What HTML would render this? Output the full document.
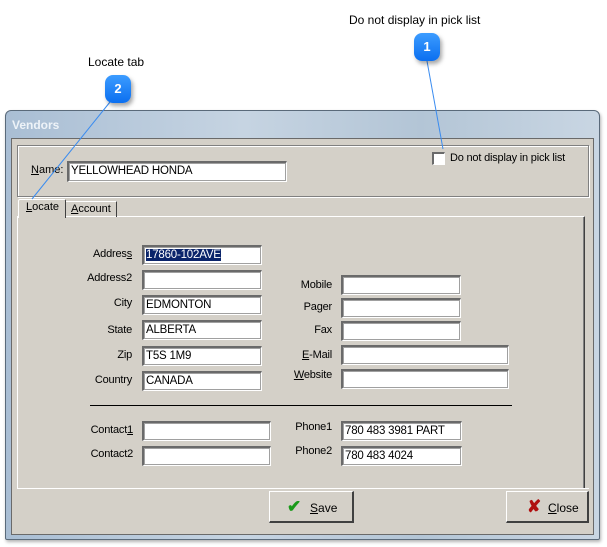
<!DOCTYPE html>
<html><head><meta charset="utf-8"><style>
body{margin:0;width:607px;height:547px;background:#fff;position:relative;overflow:hidden;font-family:"Liberation Sans",sans-serif;font-size:11px;color:#000}
div,span{position:absolute;box-sizing:border-box}
.in{background:#fff;border-top:2px solid #6a6a6a;border-left:2px solid #6a6a6a;border-bottom:1px solid #fff;border-right:1px solid #fff;box-shadow:0 0 0 1px #a0a0a0 inset;padding:2px 0 0 2px;white-space:nowrap;font-size:11.5px;letter-spacing:-0.2px}
.lb{text-align:right;width:80px;white-space:nowrap;letter-spacing:-0.2px}
.rl{text-align:right;width:60px;white-space:nowrap;letter-spacing:-0.2px}
.badge{width:26px;height:28px;border-radius:8px;background:linear-gradient(#3c9cff,#0b6ff0);color:#fff;font-weight:bold;font-size:13px;text-align:center;line-height:28px;box-shadow:2px 3px 4px rgba(0,0,0,.35)}
.btn{background:#d4d0c8;border-top:1px solid #fff;border-left:1px solid #fff;border-right:2px solid #404040;border-bottom:2px solid #404040;font-size:12px}
</style></head><body>
<span style="left:349px;top:13px;font-size:12px">Do not display in pick list</span>
<span style="left:88px;top:55px;font-size:12px">Locate tab</span>
<div style="left:5px;top:110px;width:595px;height:430px;border:1px solid #5a6a7a;border-radius:6px 6px 2px 2px;background:linear-gradient(90deg,#a9bed4,#c6d4e2 40%,#b3c5d6 70%,#c9d6e3);box-shadow:1px 2px 3px rgba(0,0,0,.3)"></div>
<span style="left:12px;top:118px;color:#eef3f8;font-size:12px;font-weight:bold">Vendors</span>
<div style="left:11px;top:138px;width:583px;height:397px;background:#d4d0c8;border:1px solid #6a6a6a"></div>
<div style="left:17px;top:145px;width:572px;height:52px;border:1px solid #808080;box-shadow:1px 1px 0 #fff inset,1px 1px 0 #fff"></div>
<span style="left:31px;top:164px"><u>N</u>ame:</span>
<div class="in" style="left:67px;top:161px;width:220px;height:21px">YELLOWHEAD HONDA</div>
<div style="left:432px;top:152px;width:13px;height:13px;background:#fff;border-top:2px solid #6a6a6a;border-left:2px solid #6a6a6a;border-right:1px solid #fff;border-bottom:1px solid #fff"></div>
<span style="left:450px;top:152px;letter-spacing:-0.2px">Do not display in pick list</span>
<div style="left:17px;top:216px;width:568px;height:273px;border-top:1px solid #fff;border-left:1px solid #fff;border-right:1px solid #404040;box-shadow:-1px 0 0 #808080 inset;border-bottom:1px solid #808080"></div>
<div style="left:18px;top:199px;width:48px;height:19px;background:#d4d0c8;border-top:1px solid #fff;border-left:1px solid #fff;border-right:1px solid #404040;border-radius:2px 2px 0 0"></div>
<span style="left:26px;top:201px"><u>L</u>ocate</span>
<div style="left:66px;top:201px;width:51px;height:16px;border-top:1px solid #fff;border-right:1px solid #404040"></div>
<span style="left:71px;top:203px"><u>A</u>ccount</span>
<span class="lb" style="left:52px;top:248px">Addres<u>s</u></span><div class="in" style="left:142px;top:245px;width:120px;height:20px"><span style="position:static;background:#0a246a;color:#fff">17860-102AVE</span></div>
<span class="lb" style="left:52px;top:272px">Address2</span><div class="in" style="left:142px;top:270px;width:120px;height:20px"></div>
<span class="lb" style="left:52px;top:297px">City</span><div class="in" style="left:142px;top:295px;width:120px;height:20px">EDMONTON</div>
<span class="lb" style="left:52px;top:324px">State</span><div class="in" style="left:142px;top:320px;width:120px;height:20px">ALBERTA</div>
<span class="lb" style="left:52px;top:349px">Zip</span><div class="in" style="left:142px;top:346px;width:120px;height:20px">T5S 1M9</div>
<span class="lb" style="left:52px;top:374px">Country</span><div class="in" style="left:142px;top:371px;width:120px;height:20px">CANADA</div>
<span class="rl" style="left:272px;top:279px">Mobile</span><div class="in" style="left:341px;top:275px;width:120px;height:20px"></div>
<span class="rl" style="left:272px;top:301px">Pager</span><div class="in" style="left:341px;top:298px;width:120px;height:20px"></div>
<span class="rl" style="left:272px;top:324px">Fax</span><div class="in" style="left:341px;top:321px;width:120px;height:20px"></div>
<span class="rl" style="left:272px;top:349px"><u>E</u>-Mail</span><div class="in" style="left:341px;top:345px;width:168px;height:20px"></div>
<span class="rl" style="left:272px;top:369px"><u>W</u>ebsite</span><div class="in" style="left:341px;top:369px;width:168px;height:20px"></div>
<div style="left:90px;top:405px;width:422px;height:1px;background:#000"></div>
<span class="lb" style="left:53px;top:424px">Contact<u>1</u></span><div class="in" style="left:142px;top:421px;width:129px;height:20px"></div>
<span class="lb" style="left:53px;top:448px">Contact2</span><div class="in" style="left:142px;top:446px;width:129px;height:20px"></div>
<span class="rl" style="left:272px;top:421px">Phone1</span><div class="in" style="left:341px;top:421px;width:121px;height:20px">780 483 3981 PART</div>
<span class="rl" style="left:272px;top:445px">Phone2</span><div class="in" style="left:341px;top:446px;width:121px;height:20px">780 483 4024</div>
<div style="left:17px;top:488px;width:572px;height:1px;background:#fff"></div>
<div class="btn" style="left:269px;top:491px;width:85px;height:32px"><span style="left:17px;top:5px;color:#1a9a1a;font-size:17px;font-weight:bold">✔</span><span style="left:40px;top:9px"><u>S</u>ave</span></div>
<div class="btn" style="left:506px;top:491px;width:83px;height:32px"><span style="left:20px;top:5px;color:#b01010;font-size:17px;font-weight:bold">✘</span><span style="left:41px;top:9px"><u>C</u>lose</span></div>
<svg style="position:absolute;left:0;top:0" width="607" height="547"><line x1="427" y1="61" x2="443" y2="149" stroke="#3a8cf0" stroke-width="1"/><line x1="110" y1="102" x2="32" y2="199" stroke="#3a8cf0" stroke-width="1"/></svg>
<div class="badge" style="left:414px;top:33px">1</div>
<div class="badge" style="left:105px;top:75px">2</div>
</body></html>
